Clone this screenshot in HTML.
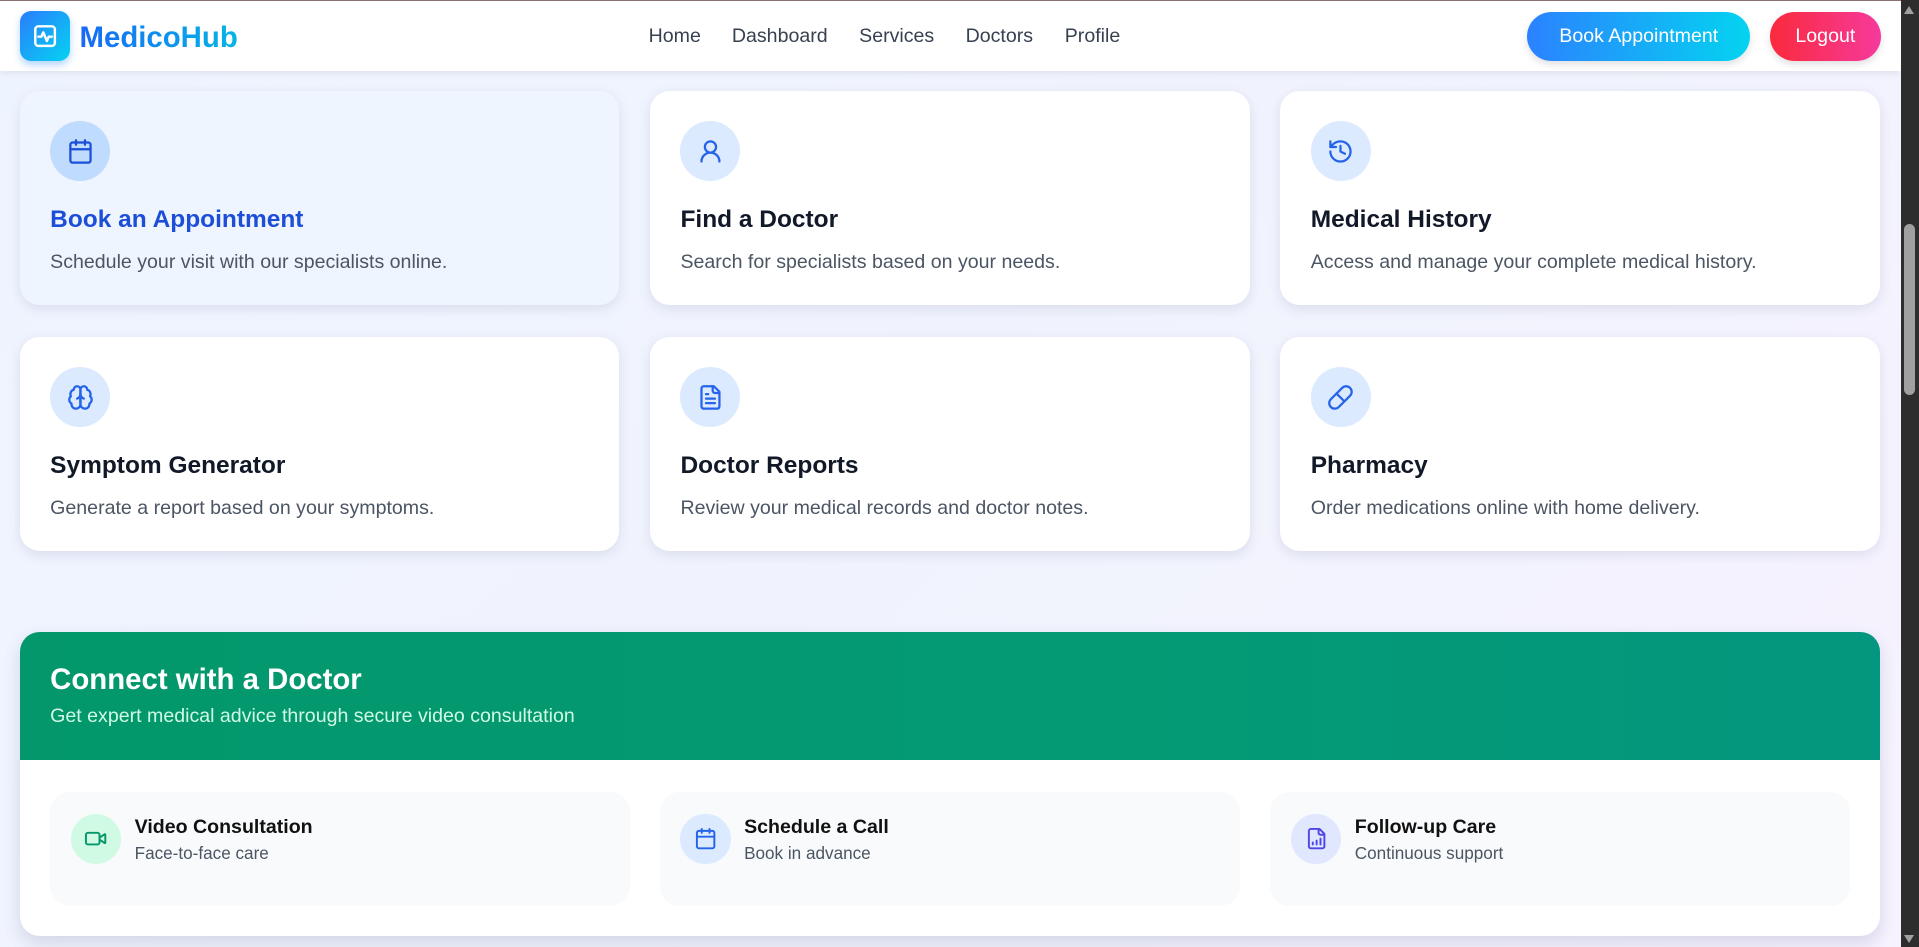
<!DOCTYPE html>
<html><head><meta charset="utf-8"><style>
html,body{margin:0;padding:0;overflow:hidden}
body{width:1919px;height:947px;font-family:"Liberation Sans",Arial,sans-serif;}
#z{zoom:1.22385;width:1568px;height:774px;position:relative;overflow:hidden;background:linear-gradient(135deg,#eef4ff 0%,#f1f3fd 60%,#f7f2ff 100%)}
.a{position:absolute}
nav{position:absolute;left:0;top:0;width:1553px;height:58px;background:#fff;box-shadow:0 2px 6px rgba(0,0,0,.08);border-top:1px solid #8a7070;box-sizing:border-box}
.logo{left:16px;top:9px;width:41px;height:41px;border-radius:9px;background:linear-gradient(135deg,#2a7dfc,#05d3f2);box-shadow:0 3px 6px rgba(0,120,255,.3)}
.brand{left:65px;top:14px;font-size:24px;font-weight:bold;background:linear-gradient(90deg,#1769f5,#05b5e6);-webkit-background-clip:text;color:transparent}
.nl{top:20px;font-size:16px;color:#374151}
.btn{top:9px;height:40px;border-radius:20px;color:#fff;font-size:16px;line-height:40px;text-align:center;box-shadow:0 3px 6px rgba(0,0,0,.12)}
.card{width:490px;height:175px;background:#fff;border-radius:16px;box-shadow:0 3px 10px rgba(30,40,90,.10)}
.ic{position:absolute;left:25px;top:25px;width:49px;height:49px;border-radius:50%;background:#dbeafe;display:flex;align-items:center;justify-content:center}
.card h3{position:absolute;left:25px;top:94px;margin:0;font-size:20px;color:#111827}
.card p{position:absolute;left:25px;top:131px;margin:0;font-size:16px;color:#4b5563}
.sc{top:647px;width:474px;height:93px;background:#f8fafc;border-radius:16px}
.sc .ci{position:absolute;left:17px;top:18px;width:41px;height:41px;border-radius:50%;display:flex;align-items:center;justify-content:center}
.sc b{position:absolute;left:69px;top:20px;font-size:16px;color:#111}
.sc span{position:absolute;left:69px;top:42px;font-size:14px;color:#4b5563}
svg{fill:none;stroke-linecap:round;stroke-linejoin:round}
</style></head><body><div id="z">
<nav>
<div class="a logo" style="top:8px"><svg width="41" height="41" viewBox="0 0 41 41" stroke="#fff" stroke-width="2"><rect x="12.5" y="12.5" width="16" height="16" rx="2.5"/><path d="M15 21h2.5l1.5-3.5 3 7 1.5-3.5h2.5"/></svg></div>
<div class="a brand" style="top:16px">MedicoHub</div>
<div class="a nl" style="left:530px">Home</div>
<div class="a nl" style="left:598px">Dashboard</div>
<div class="a nl" style="left:702px">Services</div>
<div class="a nl" style="left:789px">Doctors</div>
<div class="a nl" style="left:870px">Profile</div>
<div class="a btn" style="left:1248px;width:182px;background:linear-gradient(90deg,#2b82ff,#04d3f0)">Book Appointment</div>
<div class="a btn" style="left:1446px;width:91px;background:linear-gradient(90deg,#fa2a3c,#f53a9c)">Logout</div>
</nav>
<div class="a" style="left:1553px;top:0;width:15px;height:774px;background:#2d2d2d"></div>
<div class="a" style="left:1556px;top:183px;width:9px;height:140px;background:#a0a0a0;border-radius:5px"></div>
<div class="a" style="left:1556px;top:5px;width:0;height:0;border-left:4.5px solid transparent;border-right:4.5px solid transparent;border-bottom:7px solid #a0a0a0"></div>
<div class="a" style="left:1556px;top:764px;width:0;height:0;border-left:4.5px solid transparent;border-right:4.5px solid transparent;border-top:7px solid #a0a0a0"></div>

<div class="a card" style="left:16px;top:74px;background:#eff5ff"><div class="ic" style="background:#bfdbfe"><svg width="22" height="22" viewBox="0 0 24 24" stroke="#1d4ed8" stroke-width="2"><rect x="3" y="4" width="18" height="18" rx="2"/><path d="M8 2v4M16 2v4M3 10h18"/></svg></div><h3 style="color:#1d4ed8">Book an Appointment</h3><p>Schedule your visit with our specialists online.</p></div>
<div class="a card" style="left:531px;top:74px"><div class="ic"><svg width="22" height="22" viewBox="0 0 24 24" stroke="#2563eb" stroke-width="2"><circle cx="12" cy="8" r="5"/><path d="M20 21a8 8 0 0 0-16 0"/></svg></div><h3>Find a Doctor</h3><p>Search for specialists based on your needs.</p></div>
<div class="a card" style="left:1046px;top:74px"><div class="ic"><svg width="22" height="22" viewBox="0 0 24 24" stroke="#2563eb" stroke-width="2"><path d="M3 12a9 9 0 1 0 9-9 9.75 9.75 0 0 0-6.74 2.74L3 8"/><path d="M3 3v5h5M12 7v5l4 2"/></svg></div><h3>Medical History</h3><p>Access and manage your complete medical history.</p></div>
<div class="a card" style="left:16px;top:275px"><div class="ic"><svg width="22" height="22" viewBox="0 0 24 24" stroke="#2563eb" stroke-width="2"><path d="M12 5a3 3 0 1 0-5.997.125 4 4 0 0 0-2.526 5.77 4 4 0 0 0 .556 6.588A4 4 0 1 0 12 18Z"/><path d="M12 5a3 3 0 1 1 5.997.125 4 4 0 0 1 2.526 5.77 4 4 0 0 1-.556 6.588A4 4 0 1 1 12 18Z"/><path d="M12 5v13M9 13a4.5 4.5 0 0 0 3-4M15 13a4.5 4.5 0 0 1-3-4"/></svg></div><h3>Symptom Generator</h3><p>Generate a report based on your symptoms.</p></div>
<div class="a card" style="left:531px;top:275px"><div class="ic"><svg width="22" height="22" viewBox="0 0 24 24" stroke="#2563eb" stroke-width="2"><path d="M15 2H6a2 2 0 0 0-2 2v16a2 2 0 0 0 2 2h12a2 2 0 0 0 2-2V7Z"/><path d="M14 2v4a2 2 0 0 0 2 2h4M16 13H8M16 17H8M10 9H8"/></svg></div><h3>Doctor Reports</h3><p>Review your medical records and doctor notes.</p></div>
<div class="a card" style="left:1046px;top:275px"><div class="ic"><svg width="22" height="22" viewBox="0 0 24 24" stroke="#2563eb" stroke-width="2"><path d="m10.5 20.5 10-10a4.95 4.95 0 1 0-7-7l-10 10a4.95 4.95 0 1 0 7 7Z"/><path d="m8.5 8.5 7 7"/></svg></div><h3>Pharmacy</h3><p>Order medications online with home delivery.</p></div>

<div class="a" style="left:16px;top:516px;width:1520px;height:249px;background:#fff;border-radius:16px;overflow:hidden;box-shadow:0 6px 14px rgba(30,40,90,.14)">
<div class="a" style="left:0;top:0;width:1520px;height:105px;background:linear-gradient(90deg,#03976b,#049a74 60%,#05967f)"></div>
<div class="a" style="left:25px;top:26px;font-size:24px;font-weight:bold;color:#fff">Connect with a Doctor</div>
<div class="a" style="left:25px;top:60px;font-size:16px;color:#d1fae5">Get expert medical advice through secure video consultation</div>
</div>
<div class="a sc" style="left:41px"><div class="ci" style="background:#d1fae5"><svg width="19" height="19" viewBox="0 0 24 24" stroke="#059669" stroke-width="2"><path d="m16 13 5.2 3.5a.5.5 0 0 0 .8-.4V7.9a.5.5 0 0 0-.8-.4L16 11"/><rect x="2" y="6" width="14" height="12" rx="2"/></svg></div><b>Video Consultation</b><span>Face-to-face care</span></div>
<div class="a sc" style="left:539px"><div class="ci" style="background:#dbeafe"><svg width="19" height="19" viewBox="0 0 24 24" stroke="#2563eb" stroke-width="2"><rect x="3" y="4" width="18" height="18" rx="2"/><path d="M8 2v4M16 2v4M3 10h18"/></svg></div><b>Schedule a Call</b><span>Book in advance</span></div>
<div class="a sc" style="left:1038px"><div class="ci" style="background:#e0e7ff"><svg width="19" height="19" viewBox="0 0 24 24" stroke="#4f46e5" stroke-width="2"><path d="M15 2H6a2 2 0 0 0-2 2v16a2 2 0 0 0 2 2h12a2 2 0 0 0 2-2V7Z"/><path d="M14 2v4a2 2 0 0 0 2 2h4M8 18v-2M12 18v-4M16 18v-6"/></svg></div><b>Follow-up Care</b><span>Continuous support</span></div>
</div></body></html>
